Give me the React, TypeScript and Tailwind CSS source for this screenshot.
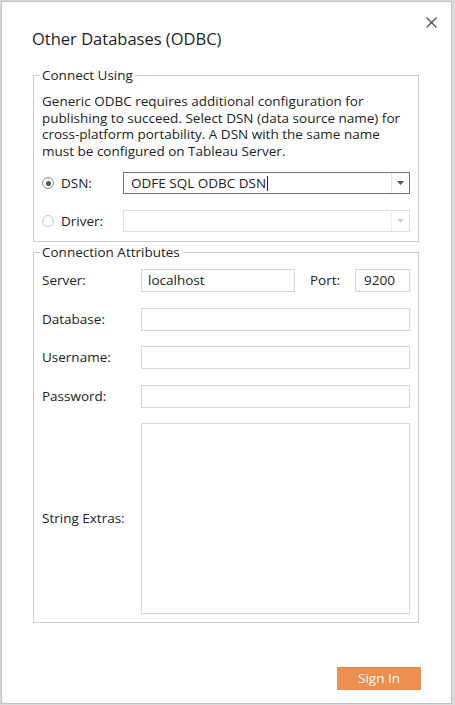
import React from 'react'

const font = { fontFamily: '"Open Sans", "DejaVu Sans", sans-serif' }

function Radio({ checked }: { checked?: boolean }) {
  return (
    <span
      className={
        'flex h-[12px] w-[12px] items-center justify-center rounded-full border bg-white ' +
        (checked ? 'border-[#8a8a8a]' : 'border-[#c4c4c4]')
      }
    >
      {checked && <span className="h-[5px] w-[5px] rounded-full bg-[#555]" />}
    </span>
  )
}

function Select({ value, active }: { value?: string; active?: boolean }) {
  return (
    <div
      className={
        'flex h-[22px] flex-1 items-center border bg-white ' +
        (active ? 'border-[#707070]' : 'border-[#dedede]')
      }
    >
      <div className="flex flex-1 items-center pl-[7px] text-[13.5px] text-[#222]">
        {value}
        {active && <span className="ml-[1px] h-[15px] w-px bg-[#222]" />}
      </div>
      <div
        className={
          'flex h-full w-[18px] items-center justify-center border-l ' +
          (active ? 'border-[#e2e2e2]' : 'border-[#efefef]')
        }
      >
        <svg width="7" height="4" viewBox="0 0 7 4">
          <path d="M0 0h7L3.5 4z" fill={active ? '#555' : '#cfcfcf'} />
        </svg>
      </div>
    </div>
  )
}

function Field({ label, value }: { label: string; value?: string }) {
  return (
    <div className="flex h-[23px] items-center">
      <div className="w-[99px] text-[13.5px] text-[#222]">{label}</div>
      <div className="flex h-full flex-1 items-center border border-[#d6d6d6] bg-white pl-[6px] text-[13.5px] text-[#222]">
        {value}
      </div>
    </div>
  )
}

export default function App() {
  return (
    <div className="h-[705px] w-[455px] bg-[#d9d9d9] pb-[1px] pl-[1px] pr-[3px] pt-[1px]" style={font}>
      <div className="relative flex h-full flex-col border border-[#c2c2c2] bg-white">
        <button className="absolute right-[13px] top-[13px] flex h-[14px] w-[14px] items-center justify-center">
          <svg width="11" height="11" viewBox="0 0 11 11">
            <path d="M0.5 0.5l10 10M10.5 0.5l-10 10" stroke="#444" strokeWidth="1.1" />
          </svg>
        </button>

        <h1 className="ml-[30px] mt-[25px] h-[24px] text-[16.5px] leading-[24px] text-[#1e1e1e]">
          Other Databases (ODBC)
        </h1>

        <fieldset className="ml-[31px] mt-[16px] w-[386px] border border-[#cbcbcb] px-[8px] pb-[9px]">
          <legend className="-ml-[2px] px-[2px] text-[13.5px] leading-[16px] text-[#222]">Connect Using</legend>
          <p className="mt-[10px] text-[13.5px] leading-[16.5px] text-[#222]">
            Generic ODBC requires additional configuration for publishing to succeed. Select DSN (data source name) for
            cross-platform portability. A DSN with the same name must be configured on Tableau Server.
          </p>
          <div className="mt-[13px] flex items-center">
            <div className="flex w-[81px] items-center gap-[7px]">
              <Radio checked />
              <span className="text-[13.5px] text-[#222]">DSN:</span>
            </div>
            <Select value="ODFE SQL ODBC DSN" active />
          </div>
          <div className="mt-[16px] flex items-center">
            <div className="flex w-[81px] items-center gap-[7px]">
              <Radio />
              <span className="text-[13.5px] text-[#222]">Driver:</span>
            </div>
            <Select />
          </div>
        </fieldset>

        <fieldset className="ml-[31px] mt-[2px] w-[386px] border border-[#cbcbcb] px-[8px] pb-[8px]">
          <legend className="-ml-[2px] px-[2px] text-[13.5px] leading-[16px] text-[#222]">Connection Attributes</legend>
          <div className="mt-[9px] flex flex-col gap-[15.5px]">
            <div className="flex h-[23px] items-center">
              <div className="w-[99px] text-[13.5px] text-[#222]">Server:</div>
              <div className="flex h-full w-[154px] items-center border border-[#d6d6d6] pl-[6px] text-[13.5px] text-[#222]">
                localhost
              </div>
              <div className="ml-[15px] w-[45px] text-[13.5px] text-[#222]">Port:</div>
              <div className="flex h-full flex-1 items-center border border-[#d6d6d6] pl-[8px] text-[13.5px] text-[#222]">
                9200
              </div>
            </div>
            <Field label="Database:" />
            <Field label="Username:" />
            <Field label="Password:" />
          </div>
          <div className="mt-[15.5px] flex h-[191px] items-center">
            <div className="w-[99px] text-[13.5px] text-[#222]">String Extras:</div>
            <div className="h-full flex-1 border border-[#d6d6d6] bg-white" />
          </div>
        </fieldset>

        <div className="mr-[30px] mt-[44px] flex justify-end">
          <button className="h-[23px] w-[84px] bg-[#eb8e4f] text-[13.5px] text-white">Sign In</button>
        </div>
      </div>
    </div>
  )
}
